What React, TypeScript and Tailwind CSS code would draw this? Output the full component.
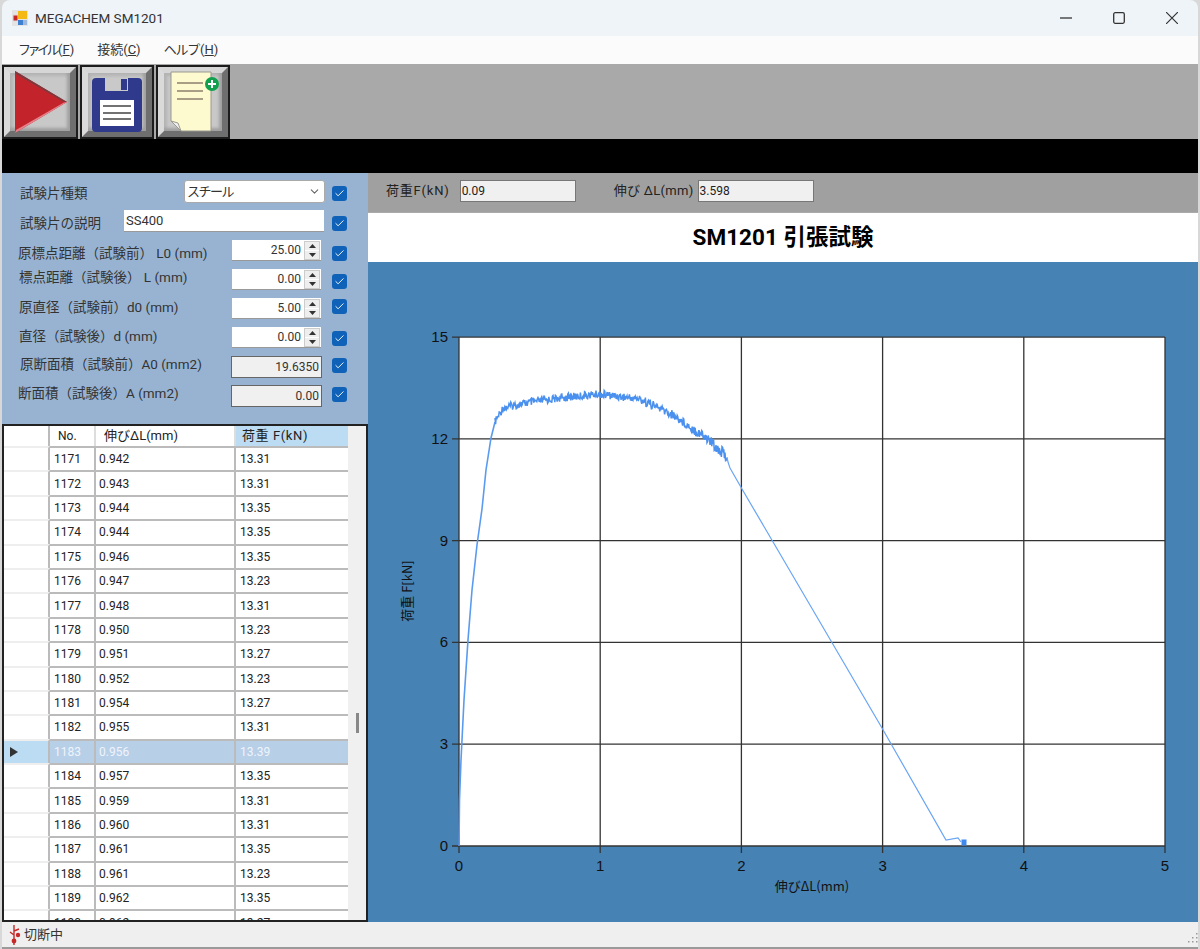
import { type ReactNode } from "react";
import { Check, ChevronDown } from "lucide-react";

const JP = "font-['Roboto','Noto_Sans_CJK_JP',sans-serif]";

const fields = [
  { label: "原標点距離（試験前） L0 (mm)", value: "25.00", labelCls: "pl-[16px] mt-[5px]", tickCls: "mt-[5px]" },
  { label: "標点距離（試験後） L (mm)", value: "0.00", labelCls: "pl-[17px] mb-[5px]", tickCls: "mt-[3px]" },
  { label: "原直径（試験前）d0 (mm)", value: "5.00", labelCls: "pl-[17px] mb-[3px]", tickCls: "mb-[5px]" },
  { label: "直径（試験後）d (mm)", value: "0.00", labelCls: "pl-[17px] mb-[3px]", tickCls: "mt-px" },
];

const readOnly = [
  { label: "原断面積（試験前）A0 (mm2)", value: "19.6350", labelCls: "pl-[18px] mb-[5px]", tickCls: "mb-[3px]" },
  { label: "断面積（試験後）A (mm2)", value: "0.00", labelCls: "pl-[16px] mb-[5px]", tickCls: "mb-[3px]" },
];

const rows = [
  ["1171", "0.942", "13.31"],
  ["1172", "0.943", "13.31"],
  ["1173", "0.944", "13.35"],
  ["1174", "0.944", "13.35"],
  ["1175", "0.946", "13.35"],
  ["1176", "0.947", "13.23"],
  ["1177", "0.948", "13.31"],
  ["1178", "0.950", "13.23"],
  ["1179", "0.951", "13.27"],
  ["1180", "0.952", "13.23"],
  ["1181", "0.954", "13.27"],
  ["1182", "0.955", "13.31"],
  ["1183", "0.956", "13.39"],
  ["1184", "0.957", "13.35"],
  ["1185", "0.959", "13.31"],
  ["1186", "0.960", "13.31"],
  ["1187", "0.961", "13.35"],
  ["1188", "0.961", "13.23"],
  ["1189", "0.962", "13.35"],
  ["1190", "0.962", "13.27"],
];

function Tick({ className = "" }: { className?: string }) {
  return (
    <span className={`ml-auto flex size-[15px] shrink-0 items-center justify-center rounded-[3px] bg-[#0f62b8] ${className}`}>
      <Check size={11} strokeWidth={2} className="text-white" />
    </span>
  );
}

function Spin() {
  return (
    <span className="flex h-[19px] w-[16px] flex-col gap-px border border-[#ccc] bg-white">
      <span className="flex flex-1 items-center justify-center bg-[#eee]">
        <svg width="7" height="4" viewBox="0 0 7 4"><path d="M3.5 0L7 4H0z" fill="#333" /></svg>
      </span>
      <span className="flex flex-1 items-center justify-center bg-[#eee]">
        <svg width="7" height="4" viewBox="0 0 7 4"><path d="M0 0h7L3.5 4z" fill="#333" /></svg>
      </span>
    </span>
  );
}

function PlayIcon() {
  return (
    <svg width="54" height="64" viewBox="0 0 54 64" className="ml-px">
      <path d="M1 1L53 32L1 63z" fill="#c3242c" />
      <path d="M1 1L53 32L50 32L2 4z" fill="#7c3a3e" />
      <path d="M1 63L53 32L50 32.5L2 60z" fill="#e8808a" />
    </svg>
  );
}

function SaveIcon() {
  return (
    <svg width="50" height="54" viewBox="0 0 50 54" className="mt-[5px]">
      <path d="M4 0H46a4 4 0 0 1 4 4V50a4 4 0 0 1-4 4H4a4 4 0 0 1-4-4V4a4 4 0 0 1 4-4z" fill="#2f3a8c" />
      <rect x="13" y="0" width="23" height="13" fill="#c9c9c9" />
      <rect x="29" y="1" width="6" height="11" fill="#2f3a8c" />
      <rect x="8" y="22" width="34" height="26" fill="#fff" />
      <path d="M11 28H39M11 35H39M11 41H39" stroke="#444" strokeWidth="1.4" />
    </svg>
  );
}

function NoteIcon() {
  return (
    <svg width="50" height="62" viewBox="0 0 50 62" className="ml-[3px]">
      <path d="M1 1H41V60H11L1 50z" fill="#fdfad0" stroke="#9a9a90" />
      <path d="M1 50L8 52L11 60z" fill="#eee" stroke="#9a9a90" />
      <path d="M7 12H33M7 20H33M7 28H33" stroke="#8c7f6c" strokeWidth="1.4" />
      <circle cx="42" cy="13" r="7" fill="#11a04e" />
      <path d="M38 13H46M42 9V17" stroke="#fff" strokeWidth="2" />
    </svg>
  );
}

function ToolButton({ children, width }: { children: ReactNode; width: string }) {
  return (
    <div className={`${width} h-[74px] shrink-0 border-2 border-[#1c1c1c]`}>
      <div className="flex h-full w-full items-center justify-center border-[6px] border-t-[#d6d6d6] border-r-[#6f6f6f] border-b-[#6f6f6f] border-l-[#dadada] bg-[#c8c8c8] shadow-[inset_-3px_-3px_3px_#a0a0a0,inset_3px_3px_3px_#b4b4b4]">
        {children}
      </div>
    </div>
  );
}

// fake measurement noise, same on each render
function noise(i: number) {
  const v = Math.sin(i * 12.9898) * 43758.5453;
  return v - Math.floor(v) - 0.5;
}

function plateauPoints() {
  const anchors = [
    [495, 422], [503, 408], [520, 404], [560, 398], [600, 394], [640, 399], [673, 415], [707, 438], [727, 457],
  ];
  const pts: string[] = [];
  let n = 0;
  for (let a = 0; a < anchors.length - 1; a++) {
    const [x0, y0] = anchors[a];
    const [x1, y1] = anchors[a + 1];
    for (let x = x0; x < x1; x += 0.6) {
      const t = (x - x0) / (x1 - x0);
      const amp = x > 690 ? 12 : x > 640 ? 9 : 8;
      pts.push(`${x.toFixed(1)},${(y0 + (y1 - y0) * t + noise(n++) * amp).toFixed(1)}`);
    }
  }
  return pts.join(" ");
}

const rise = "459,846 459.5,800 461,760 464,700 468,640 472,590 477,545 482,509 486,470 491,438 495,422";
const fall = "727,457 728,462 730,468 742,489 882,728 946,840 958,838 961,842";

function Chart() {
  const xs = [0, 1, 2, 3, 4, 5];
  const ys = [0, 3, 6, 9, 12, 15];
  const px = (v: number) => 91 + v * 141.2;
  const py = (v: number) => 584 - v * 33.93;
  return (
    <svg width="832" height="660" viewBox="0 0 832 660" className="block">
      <rect x="91" y="75" width="706" height="509" fill="#fff" />
      {xs.map((v) => (
        <g key={v}>
          <line x1={px(v)} x2={px(v)} y1="75" y2="591" stroke="#333" strokeWidth="1.3" />
          <text x={px(v)} y="609" textAnchor="middle" fontSize="15" fill="#111" fontFamily="Liberation Sans">{v}</text>
        </g>
      ))}
      {ys.map((v) => (
        <g key={v}>
          <line x1="84" x2="797" y1={py(v)} y2={py(v)} stroke="#333" strokeWidth="1.3" />
          <text x="80" y={py(v) + 5} textAnchor="end" fontSize="15" fill="#111" fontFamily="Liberation Sans">{v}</text>
        </g>
      ))}
      <g transform="translate(-368 -262)" fill="none">
        <polyline points={rise} stroke="#5a9bf0" strokeWidth="1.6" />
        <polyline points={plateauPoints()} stroke="#4a90ee" strokeWidth="1.5" />
        <polyline points={fall} stroke="#6aa5f5" strokeWidth="1.2" />
        <rect x="962" y="840" width="4" height="5" fill="#3f88ee" stroke="#3f88ee" />
      </g>
      <text x="444" y="629" textAnchor="middle" fontSize="13" fill="#111" fontFamily="Noto Sans CJK JP">伸びΔL(mm)</text>
      <text x="0" y="0" transform="translate(44 329) rotate(-90)" textAnchor="middle" fontSize="13" fill="#111" fontFamily="Noto Sans CJK JP">荷重 F[kN]</text>
    </svg>
  );
}

export default function App() {
  return (
    <div className={`${JP} flex h-[949px] w-[1200px] flex-col overflow-hidden border-x-2 border-[#d8d8d8] bg-[#d8d8d8] text-[12px] text-[#222]`}>
      {/* title bar */}
      <div className="flex h-[36px] shrink-0 items-center rounded-t-lg bg-[#eff4f9] pl-[10px]">
        <svg width="16" height="16" viewBox="0 0 16 16">
          <rect x="0" y="0" width="16" height="16" fill="#e4e4e4" />
          <rect x="1" y="5" width="5" height="6" fill="#c62828" stroke="#ddd" strokeWidth="1" />
          <rect x="6" y="1" width="9" height="8" fill="#f5b916" />
          <rect x="6" y="10" width="5" height="5" fill="#3f7fd0" />
          <rect x="11" y="10" width="4" height="5" fill="#9db8dc" />
        </svg>
        <span className="ml-[7px] text-[13.5px] text-[#333]">MEGACHEM SM1201</span>
        <div className="ml-auto flex items-center">
          <span className="flex w-[53px] justify-center">
            <svg width="12" height="12" viewBox="0 0 12 12"><path d="M0 6H12" stroke="#333" strokeWidth="1.3" /></svg>
          </span>
          <span className="flex w-[53px] justify-center">
            <svg width="12" height="12" viewBox="0 0 12 12"><rect x="0.7" y="0.7" width="10.6" height="10.6" rx="1.5" fill="none" stroke="#333" strokeWidth="1.3" /></svg>
          </span>
          <span className="flex w-[53px] justify-center">
            <svg width="12" height="12" viewBox="0 0 12 12"><path d="M0 0L12 12M12 0L0 12" stroke="#333" strokeWidth="1.2" /></svg>
          </span>
        </div>
      </div>

      {/* menu */}
      <div className="flex h-[28px] shrink-0 items-center gap-[23px] bg-[#fbfbfb] pl-[16px] text-[13px] text-[#333]">
        <span><span className="tracking-[-3.5px]">ファイル</span><span className="ml-[2px]">(<u>F</u>)</span></span>
        <span>接続(<u>C</u>)</span>
        <span><span className="tracking-[-1.2px]">ヘルプ</span><span className="ml-[1px]">(<u>H</u>)</span></span>
      </div>

      {/* toolbar */}
      <div className="flex h-[75px] shrink-0 gap-[2px] bg-[#a9a9a9] pt-px">
        <ToolButton width="w-[76px]"><PlayIcon /></ToolButton>
        <ToolButton width="w-[74px]"><SaveIcon /></ToolButton>
        <ToolButton width="w-[74px]"><NoteIcon /></ToolButton>
      </div>
      <div className="h-[34px] shrink-0 bg-black" />

      <div className="flex min-h-0 flex-1">
        {/* left */}
        <div className="flex w-[366px] shrink-0 flex-col bg-[#98b3d2]">
          <div className="h-[251px] shrink-0 pt-[3px] text-[13.5px] text-[#333]">
            <div className="flex h-[30px] items-center pr-[21px]">
              <span className="mt-[5px] w-[182px] pl-[18px]">試験片種類</span>
              <span className="flex h-[23px] w-[141px] items-center justify-between rounded-[3px] border border-[#aaa] bg-white pl-[2px] pr-[3px] text-[13px] leading-none tracking-[-1.5px]">
                スチール
                <ChevronDown size={13} className="text-[#666]" />
              </span>
              <Tick className="mt-[5px]" />
            </div>
            <div className="flex h-[30px] items-center pr-[21px]">
              <span className="mt-[4px] w-[122px] pl-[18px]">試験片の説明</span>
              <span className="flex h-[22px] w-[200px] items-center border-b border-[#999] bg-white pl-[2px] text-[13px]">SS400</span>
              <Tick className="mt-[4px]" />
            </div>
            {fields.map((f) => (
              <div key={f.label} className="flex h-[29px] items-center pr-[21px]">
                <span className={`w-[230px] whitespace-nowrap ${f.labelCls}`}>{f.label}</span>
                <span className="flex h-[21px] w-[89px] shrink-0 items-center justify-end border-b border-[#999] bg-white pr-px text-[12px]">
                  <span className="pr-[3px]">{f.value}</span>
                  <Spin />
                </span>
                <Tick className={f.tickCls} />
              </div>
            ))}
            {readOnly.map((f) => (
              <div key={f.label} className="flex h-[29px] items-center pr-[21px]">
                <span className={`w-[229px] whitespace-nowrap ${f.labelCls}`}>{f.label}</span>
                <span className="flex h-[22px] w-[91px] shrink-0 items-center justify-end border border-[#666] bg-[#f0f0f0] pr-[2px] text-[12px]">{f.value}</span>
                <Tick className={f.tickCls} />
              </div>
            ))}
          </div>

          {/* grid */}
          <div className="flex min-h-0 flex-1 flex-col overflow-hidden border-2 border-[#222] bg-[#f0f0f0]">
            <div className="flex h-[20px] shrink-0 items-center text-[13px]">
              <div className="h-full w-[46px] shrink-0 border-r-2 border-[#bbb] bg-white" />
              <div className="flex h-full w-[46px] shrink-0 items-center border-r-2 border-[#ddd] bg-white pl-[8px] text-[12px]">No.</div>
              <div className="flex h-full w-[140px] shrink-0 items-center border-r-2 border-[#ddd] bg-white pl-[8px]">伸びΔL(mm)</div>
              <div className="flex h-full w-[112px] shrink-0 items-center bg-[#bcdcf3] pl-[6px] tracking-[0.6px]">荷重 F(kN)</div>
            </div>
            <div className="flex min-h-0 flex-1">
              <div className="w-[344px] shrink-0 overflow-hidden">
                {rows.map((r) => {
                  const selected = r[0] === "1183";
                  return (
                    <div key={r[0]} className={`flex h-[24.4px] items-center ${selected ? "bg-[#b8cfe8] text-[#eef4fb]" : "bg-white text-[#222]"}`}>
                      <div className={`flex h-full w-[46px] shrink-0 items-center border-t-2 border-r-2 border-t-[#eee] border-r-[#bbb] pl-[6px] ${selected ? "bg-[#bcdcf3]" : "bg-white"}`}>
                        {selected && <svg width="8" height="10" viewBox="0 0 8 10"><path d="M0 0L8 5L0 10z" fill="#333" /></svg>}
                      </div>
                      <div className="flex h-full w-[46px] shrink-0 items-center border-t-2 border-r-2 border-[#bbb] pl-[4px]">{r[0]}</div>
                      <div className="flex h-full w-[140px] shrink-0 items-center border-t-2 border-r-2 border-[#bbb] pl-[3px]">{r[1]}</div>
                      <div className="flex h-full w-[112px] shrink-0 items-center border-t-2 border-[#bbb] pl-[4px]">{r[2]}</div>
                    </div>
                  );
                })}
              </div>
              <div className="flex flex-1 flex-col items-center pt-[267px]">
                <div className="h-[20px] w-[3px] bg-[#888]" />
              </div>
            </div>
          </div>
        </div>

        {/* right */}
        <div className="flex min-w-0 flex-1 flex-col">
          <div className="flex h-[40px] shrink-0 items-center border-b border-[#aaa] bg-[#a0a0a0] pb-[3px] pl-[18px] text-[13px] text-[#222]">
            <span className="tracking-[0.8px]">荷重F(kN)</span>
            <span className="ml-[10px] flex h-[22px] w-[116px] items-center border border-[#777] bg-[#f0f0f0] pl-px text-[12px]">0.09</span>
            <span className="ml-[38px] tracking-[0.3px]">伸び ΔL(mm)</span>
            <span className="ml-[4px] flex h-[22px] w-[116px] items-center border border-[#777] bg-[#f0f0f0] pl-px text-[12px]">3.598</span>
          </div>
          <div className="flex h-[49px] shrink-0 items-center justify-center bg-white text-[22.5px] font-bold text-black">
            SM1201 引張試験
          </div>
          <div className="min-h-0 flex-1 overflow-hidden bg-[#4682b4]">
            <Chart />
          </div>
        </div>
      </div>

      {/* status */}
      <div className="flex h-[25px] shrink-0 items-center gap-[2px] bg-[#efefef] pl-[6px] text-[13px] text-[#333]">
        <svg width="14" height="20" viewBox="0 0 14 20">
          <path d="M6 0V20M6 6L11 4M6 10L2 7" stroke="#c62828" strokeWidth="1.4" fill="none" />
          <circle cx="10" cy="10" r="2.2" fill="#c62828" />
          <circle cx="6" cy="16" r="2.4" fill="#c62828" />
        </svg>
        切断中
        <svg width="12" height="12" viewBox="0 0 12 12" className="ml-auto mt-[6px]">
          <path d="M10 1h1.5v1.5H10zM6 5h1.5v1.5H6zM10 5h1.5v1.5H10zM2 9h1.5v1.5H2zM6 9h1.5v1.5H6zM10 9h1.5v1.5H10z" fill="#999" />
        </svg>
      </div>
      <div className="h-[2px] shrink-0 bg-[#9a9a9a]" />
    </div>
  );
}
